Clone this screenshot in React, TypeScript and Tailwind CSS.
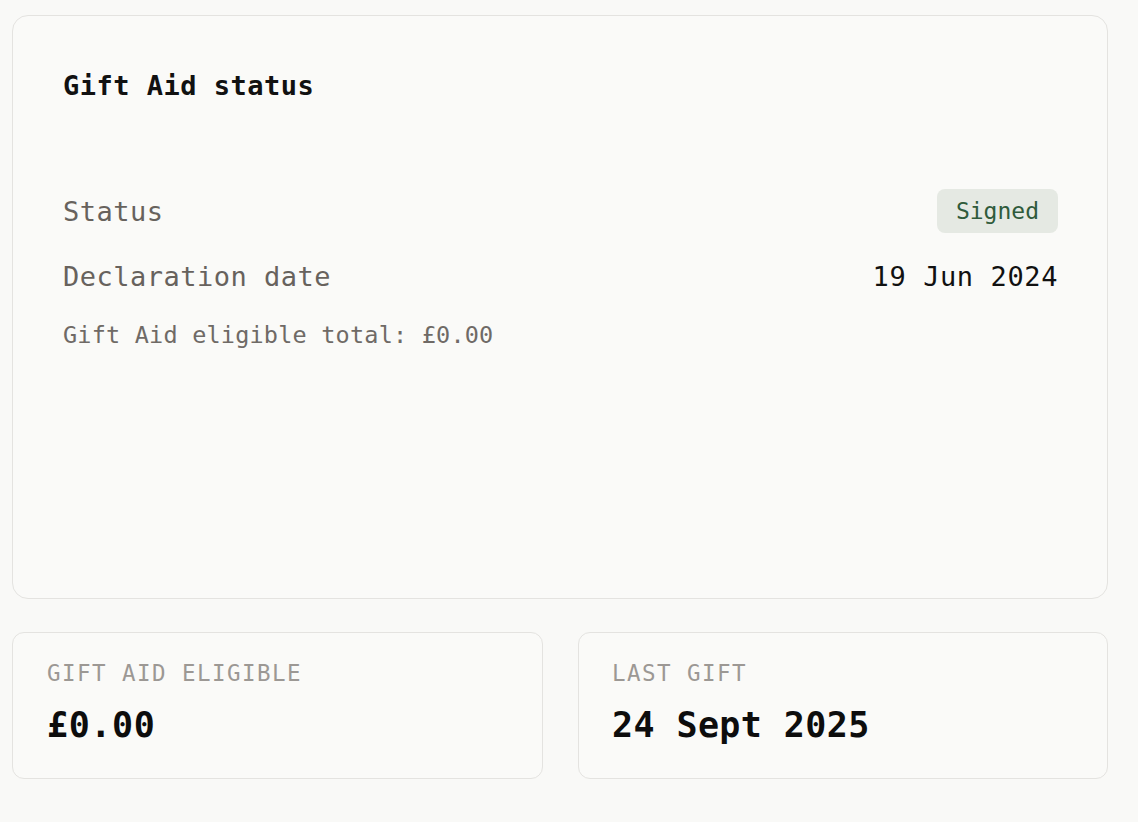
import React from "react";

const mono = { fontFamily: '"DejaVu Sans Mono", "Liberation Mono", monospace' };

export default function App() {
  return (
    <div className="min-h-screen w-full bg-[#f9f9f7]" style={mono}>
      <div className="w-[1096px] ml-[12px] pt-[15px]">
        <div className="h-[584px] rounded-[16px] border-[1.5px] border-[#e4e3e0] bg-[#fafaf8] pl-[50px] pr-[49px] pt-[49px]">
          <h2 className="text-[27px] leading-[41px] font-bold text-[#111111] tracking-[0.5px]">Gift Aid status</h2>
          <div className="mt-[83px] flex h-[44px] items-center justify-between">
            <span className="text-[27px] leading-[41px] text-[#67625d] tracking-[0.5px]">Status</span>
            <span className="flex h-[44px] items-center rounded-[8px] bg-[#e5e9e3] px-[19px] text-[23px] text-[#2f5b3b]">Signed</span>
          </div>
          <div className="mt-[23px] flex items-center justify-between">
            <span className="text-[27px] leading-[41px] text-[#67625d] tracking-[0.5px]">Declaration date</span>
            <span className="text-[27px] leading-[41px] text-[#111111] tracking-[0.6px]">19 Jun 2024</span>
          </div>
          <p className="mt-[20px] text-[23.5px] leading-[36px] text-[#6f6a66] tracking-[0.2px]">Gift Aid eligible total: £0.00</p>
        </div>
        <div className="mt-[33px] grid grid-cols-[531px_530px] gap-[35px]">
          <div className="h-[147px] rounded-[12px] border-[1.5px] border-[#e4e3e0] bg-[#fafaf8] px-[34px] pt-[23px]">
            <div className="text-[22.5px] leading-[34px] tracking-[1.45px] text-[#9c9894]">GIFT AID ELIGIBLE</div>
            <div className="mt-[14px] text-[35px] leading-[43px] font-bold text-[#0d0d0d] tracking-[0.6px]">£0.00</div>
          </div>
          <div className="h-[147px] rounded-[12px] border-[1.5px] border-[#e4e3e0] bg-[#fafaf8] px-[33px] pt-[23px]">
            <div className="text-[22.5px] leading-[34px] tracking-[1.45px] text-[#9c9894]">LAST GIFT</div>
            <div className="mt-[14px] text-[35px] leading-[43px] font-bold text-[#0d0d0d] tracking-[0.4px]">24 Sept 2025</div>
          </div>
        </div>
      </div>
    </div>
  );
}
